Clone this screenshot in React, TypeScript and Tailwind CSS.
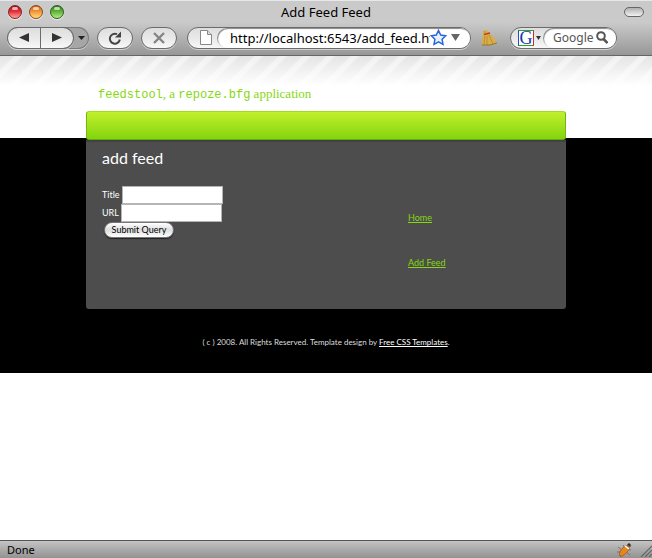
import type { ReactNode } from 'react';

const pill =
  'flex h-[22px] shrink-0 items-center justify-center border border-[#6b6b6b] bg-linear-to-b from-[#dedede] via-[#e9e9e9] to-[#f8f8f8] shadow-[0_1px_0_#d2d2d2]';
const chromeFont = "font-['Noto_Sans',sans-serif]";
const fieldClass =
  'h-[18px] w-[101px] border border-[#b5b5b5] bg-white px-1 text-[9px] text-black outline-none';

function Light({ label, className }: { label: string; className: string }) {
  return (
    <button
      type="button"
      aria-label={label}
      className={`relative size-[14px] rounded-full border shadow-[0_1px_1px_#eeeeee] ${className}`}
    >
      <span className="absolute top-px left-[3px] h-[3px] w-[6px] rounded-full bg-white/65" />
    </button>
  );
}

function TitleBar() {
  return (
    <header className="grid h-[22px] grid-cols-[1fr_auto_1fr] items-center px-2">
      <div className="flex gap-[7px]">
        <Light label="Close" className="border-[#7d2420] bg-linear-to-b from-[#a80812] via-[#ea3540] to-[#ff9c9c]" />
        <Light label="Minimize" className="border-[#8c4a18] bg-linear-to-b from-[#c8601c] via-[#f59a38] to-[#ffdc7c]" />
        <Light label="Zoom" className="border-[#2f5f20] bg-linear-to-b from-[#2f7c1c] via-[#63b83c] to-[#b4ec80]" />
      </div>
      <h1 className="text-[13px] leading-[18px] text-black">Add Feed Feed</h1>
      <button
        type="button"
        aria-label="Toggle toolbar"
        className="h-[10px] w-5 justify-self-end rounded-full border border-[#666666] bg-linear-to-b from-[#b0b0b0] to-[#f2f2f2]"
      />
    </header>
  );
}

function ToolButton({ label, className, children }: { label: string; className: string; children: ReactNode }) {
  return (
    <button type="button" aria-label={label} className={`${pill} ${className}`}>
      {children}
    </button>
  );
}

function Toolbar() {
  return (
    <nav aria-label="Browser" className="flex h-[32px] items-center px-[7px] pb-[3px]">
      <div className="flex w-[82px] shrink-0 rounded-full bg-[#a6a6a6] shadow-[inset_0_0_0_1px_#7c7c7c,0_1px_0_#d2d2d2]">
        <ToolButton label="Back" className="w-[34px] rounded-l-full">
          <svg width="10" height="9" viewBox="0 0 9 8" fill="#333"><path d="M9 0v8L0 4z" /></svg>
        </ToolButton>
        <ToolButton label="Forward" className="w-[33px] rounded-r-full border-l-0">
          <svg width="10" height="9" viewBox="0 0 9 8" fill="#333"><path d="M0 0v8l9-4z" /></svg>
        </ToolButton>
        <button type="button" aria-label="History" className="flex flex-1 items-center justify-center">
          <svg width="7" height="4" viewBox="0 0 7 4" fill="#222"><path d="M0 0h7L3.500 4z" /></svg>
        </button>
      </div>
      <ToolButton label="Reload" className="ml-2 w-9 rounded-full">
        <svg width="16" height="16" viewBox="0 0 16 16" fill="none">
          <path d="M10 4.200A5 5 0 1 0 12.800 9.500" stroke="#444" strokeWidth="2" />
          <path d="M14 1.500v6H8z" fill="#444" />
        </svg>
      </ToolButton>
      <ToolButton label="Stop" className="ml-2 w-9 rounded-full">
        <svg width="12" height="12" viewBox="0 0 12 12" stroke="#858585" strokeWidth="2.400">
          <path d="M1 1l10 10M11 1L1 11" />
        </svg>
      </ToolButton>
      <div className={`${pill} ml-[10px] w-[284px] rounded-full`}>
        <svg className="mr-1 ml-3 shrink-0" width="13" height="16" viewBox="0 0 13 16" fill="#fff" stroke="#888">
          <path d="M.5.5h7l4 4v10H.5z" /><path d="M7.500.5v4h4" fill="#ddd" />
        </svg>
        <div className="flex h-5 min-w-0 flex-1 items-center rounded-full bg-white pr-[10px] pl-[13px] shadow-[inset_1px_1px_1px_#888888]">
          <input
            aria-label="Address"
            defaultValue="http://localhost:6543/add_feed.html"
            className="min-w-0 flex-1 bg-transparent text-[13px] leading-[18px] text-black outline-none"
          />
          <svg className="shrink-0" width="17" height="17" viewBox="0 0 17 17">
            <path d="M8.500 1.500l2.200 4.600 5 .7-3.600 3.500.9 5-4.500-2.400-4.500 2.400.9-5L1.300 6.800l5-.7z" fill="#e8f2ff" stroke="#2865d8" strokeWidth="1.500" />
          </svg>
          <svg className="ml-[4px] shrink-0" width="9" height="7" viewBox="0 0 9 7" fill="#666"><path d="M0 0h9L4.500 7z" /></svg>
        </div>
      </div>
      <button type="button" aria-label="Clean up" className="ml-[10px] shrink-0">
        <svg width="17" height="16" viewBox="0 0 17 16">
          <path d="M2 1l4-1 3 4 5 5 2 4-7 2-8 0 0-4 1-6z" fill="#d9ae48" />
          <path d="M3 4.500l6-1.500" stroke="#c23c1c" strokeWidth="1.300" />
          <path d="M4 6l-1 8M6 6v9M8 5l4 9M3 1l2 3" stroke="#a87c28" strokeWidth=".6" />
          <path d="M1 15h8l7-2" fill="none" stroke="#8a6420" strokeWidth=".8" />
        </svg>
      </button>
      <div className={`${pill} ml-[12px] w-[107px] rounded-full`}>
        <div className="ml-[7px] flex size-4 shrink-0 items-center justify-center border border-t-[#2ca02c] border-r-[#d62728] border-b-[#2ca02c] border-l-[#1f4fd0] bg-white font-['Liberation_Serif',serif] text-[18px] leading-[14px] text-[#1838b0]">G</div>
        <svg className="mx-[2px] shrink-0" width="5" height="4" viewBox="0 0 5 4" fill="#333"><path d="M0 0h5L2.500 4z" /></svg>
        <div className="flex h-5 min-w-0 flex-1 items-center rounded-full bg-white pr-2 pl-[10px] shadow-[inset_1px_1px_1px_#888888]">
          <input
            aria-label="Search"
            placeholder="Google"
            className="min-w-0 flex-1 bg-transparent text-[12px] leading-[18px] outline-none placeholder:text-[#555555]"
          />
          <svg className="shrink-0" width="12" height="13" viewBox="0 0 12 13" fill="none" stroke="#555" strokeWidth="2">
            <circle cx="5" cy="5" r="3.800" /><path d="M7.500 8l4 4" strokeWidth="2.500" />
          </svg>
        </div>
      </div>
    </nav>
  );
}

function Page() {
  return (
    <main className="flex-1 bg-white font-['Lato',sans-serif]">
      <div className="bg-linear-to-b from-white from-[82px] to-black to-[82px]">
        <div className="bg-[linear-gradient(to_bottom,transparent,white_30px),repeating-linear-gradient(135deg,#e5e5e5_0px,#e5e5e5_9px,#f1f1f1_11px,#f1f1f1_15px,#e5e5e5_17px)] bg-[length:100%_30px] bg-no-repeat">
          <div className="mx-auto w-full max-w-[480px]">
            <p className="h-[55px] pt-[29px] pl-3 font-['Liberation_Serif',serif] text-[13px] leading-[18px] text-[#85d70f]">
              <span className="font-['Liberation_Mono',monospace] text-[12px]">feedstool</span>, a{' '}
              <span className="font-['Liberation_Mono',monospace] text-[12px]">repoze.bfg</span> application
            </p>
            <div className="h-[29px] rounded-[3px] border border-t-[#a2dc20] border-r-[#70b810] border-b-[#5fae0a] border-l-[#70b810] bg-linear-to-b from-[#c1f02b] to-[#84d40d]" />
            <section className="grid h-[169px] grid-cols-[306px_1fr] rounded-b-[3px] border-t-2 border-[#414141] bg-[#4d4d4d] px-4">
              <div>
                <h2 className="mt-[6px] text-[16px] leading-5 text-white">add feed</h2>
                <form className="mt-[18px] text-[9px] leading-[18px] text-white" onSubmit={(e) => e.preventDefault()}>
                  <div className="flex items-center gap-[2px]">
                    <label htmlFor="title">Title</label>
                    <input id="title" className={fieldClass} />
                  </div>
                  <div className="flex items-center gap-[2px]">
                    <label htmlFor="url">URL</label>
                    <input id="url" className={fieldClass} />
                  </div>
                  <button type="submit" className="ml-[2px] flex h-4 w-[70px] items-center justify-center rounded-full border border-[#777777] bg-linear-to-b from-white via-[#dedede] to-white text-[9px] leading-3 text-black shadow-[0_1px_1px_#222222]">
                    Submit Query
                  </button>
                </form>
              </div>
              <ul className="flex flex-col gap-[33px] pt-[70px] text-[9px] leading-3 text-[#85d70f]">
                <li><a href="#home" className="underline">Home</a></li>
                <li><a href="#add" className="underline">Add Feed</a></li>
              </ul>
            </section>
            <footer className="h-[64px] pt-[27px] text-center text-[8px] leading-3 text-[#dddddd]">
              ( c ) 2008. All Rights Reserved. Template design by <a href="#templates" className="text-white underline">Free CSS Templates</a>.
            </footer>
          </div>
        </div>
      </div>
    </main>
  );
}

export default function App() {
  return (
    <div className={`flex min-h-screen flex-col bg-white ${chromeFont}`}>
      <div className="border-t border-b border-t-[#e8e8e8] border-b-[#666666] bg-linear-to-b from-[#cacaca] from-40% to-[#979797]">
        <TitleBar />
        <Toolbar />
      </div>
      <Page />
      <footer className="flex h-[18px] items-center border-t border-[#555555] bg-linear-to-b from-[#c4c4c4] to-[#929292] pl-[7px] text-[11px] leading-4 text-black">
        <span className="flex-1">Done</span>
        <svg width="16" height="16" viewBox="0 0 16 16" fill="none" stroke="#666" strokeWidth=".8">
          <path d="M1 5l4 3M0 10h4M3 15l3-3M6 3l2 3M14 8l-4-1M13 13l-4-3" />
          <path d="M3 14C1 11 5 5 9 4s4 3 2 5-5 6-8 5z" fill="#e8851c" stroke="#a85010" />
          <path d="M10 3l2-2 2 2-1 2z" fill="#333" /><path d="M8 4l4 3" stroke="#fff" strokeWidth="1.500" />
        </svg>
        <svg className="ml-[7px]" width="12" height="15" viewBox="0 0 12 15" stroke="#666" strokeWidth="1.200">
          <path d="M1 15L12 4M5 15l7-7M9 15l3-3" />
        </svg>
      </footer>
    </div>
  );
}
